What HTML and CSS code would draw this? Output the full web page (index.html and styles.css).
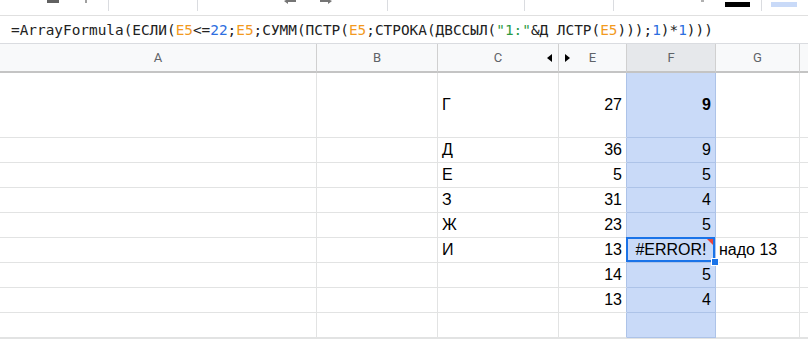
FILE: index.html
```html
<!DOCTYPE html>
<html lang="ru">
<head>
    <meta charset="UTF-8">
    <meta name="viewport" content="width=device-width, initial-scale=1.0">
    <title>Таблица</title>
    <link rel="stylesheet" href="styles.css">
</head>
<body>
    <!-- Нижний край панели инструментов -->
    <div class="toolbar">
        <span class="tb tb-print"></span>
        <span class="tb tb-paint"></span>
        <span class="tb-sep sep-1"></span>
        <span class="tb-sep sep-2"></span>
        <svg class="tb tb-dec" width="12" height="5" viewBox="0 0 12 5">
            <path d="M3 1h9" stroke="#757575" stroke-width="2"/>
            <path d="M0 1l4-2v5z" fill="#757575"/>
        </svg>
        <svg class="tb tb-inc" width="12" height="5" viewBox="0 0 12 5">
            <path d="M0 1h9" stroke="#757575" stroke-width="2"/>
            <path d="M12 1l-4-2v5z" fill="#757575"/>
        </svg>
        <span class="tb-sep sep-3"></span>
        <span class="tb-sep sep-4"></span>
        <span class="tb-sep sep-5"></span>
        <span class="tb tb-dot"></span>
        <span class="tb tb-color"></span>
        <span class="tb-sep sep-6"></span>
        <span class="tb tb-fill"></span>
    </div>

    <!-- Строка формул -->
    <div class="formula-bar">
        <span>=ArrayFormula(ЕСЛИ(<span class="ref">E5</span>&lt;=<span class="num-lit">22</span>;<span class="ref">E5</span>;СУММ(ПСТР(<span class="ref">E5</span>;СТРОКА(ДВССЫЛ(<span class="str">"1:"</span>&amp;Д ЛСТР(<span class="ref">E5</span>)));<span class="num-lit">1</span>)*<span class="num-lit">1</span>)))</span>
    </div>

    <!-- Сетка -->
    <div class="sheet">
        <div class="hd">A</div>
        <div class="hd">B</div>
        <div class="hd hd-c">C<span class="arrow-l"></span></div>
        <div class="hd hd-e"><span class="arrow-r"></span>E</div>
        <div class="hd hd-f">F</div>
        <div class="hd">G</div>
        <div class="hd hd-rest"></div>

        <div class="c"></div><div class="c"></div><div class="c txt">Г</div><div class="c num col-e">27</div><div class="c num sel bold">9</div><div class="c"></div><div class="c"></div>
        <div class="c"></div><div class="c"></div><div class="c txt">Д</div><div class="c num col-e">36</div><div class="c num sel">9</div><div class="c"></div><div class="c"></div>
        <div class="c"></div><div class="c"></div><div class="c txt">Е</div><div class="c num col-e">5</div><div class="c num sel">5</div><div class="c"></div><div class="c"></div>
        <div class="c"></div><div class="c"></div><div class="c txt">З</div><div class="c num col-e">31</div><div class="c num sel">4</div><div class="c"></div><div class="c"></div>
        <div class="c"></div><div class="c"></div><div class="c txt">Ж</div><div class="c num col-e">23</div><div class="c num sel">5</div><div class="c"></div><div class="c"></div>
        <div class="c"></div><div class="c"></div><div class="c txt">И</div><div class="c num col-e">13</div>
        <div class="c sel active err">#ERROR!<span class="err-mark"></span><span class="handle"></span></div>
        <div class="c txt note">надо 13</div><div class="c"></div>
        <div class="c"></div><div class="c"></div><div class="c"></div><div class="c num col-e">14</div><div class="c num sel">5</div><div class="c"></div><div class="c"></div>
        <div class="c"></div><div class="c"></div><div class="c"></div><div class="c num col-e">13</div><div class="c num sel">4</div><div class="c"></div><div class="c"></div>
        <div class="c"></div><div class="c"></div><div class="c"></div><div class="c col-e"></div><div class="c sel"></div><div class="c"></div><div class="c"></div>
        <div class="c"></div><div class="c"></div><div class="c"></div><div class="c"></div><div class="c dim"></div><div class="c"></div><div class="c"></div>
    </div>
</body>
</html>
```

FILE: styles.css
```css
body {
    margin: 0;
    background: #fff;
    font-family: "Liberation Sans", Arial, sans-serif;
    overflow: hidden;
}

/* панель инструментов (видна только нижняя кромка) */
.toolbar {
    display: flex;
    align-items: flex-start;
    height: 15px;
    border-bottom: 1px solid #e0e0e0;
}
.tb {
    display: block;
    flex: none;
}
.tb-print {
    margin-left: 47px;
    width: 12px;
    height: 3px;
    background: #616161;
}
.tb-paint {
    margin-left: 26px;
    width: 2px;
    height: 3px;
    background: #a0a0a0;
}
.tb-sep {
    flex: none;
    width: 1px;
    height: 11px;
    background: #dadce0;
}
.sep-1 { margin-left: 21px; }
.sep-2 { margin-left: 88px; }
.tb-dec { margin-left: 86px; }
.tb-inc { margin-left: 24px; }
.sep-3 { margin-left: 55px; }
.sep-4 { margin-left: 136px; }
.sep-5 { margin-left: 88px; }
.tb-dot {
    margin-left: 87px;
    width: 3px;
    height: 2px;
    background: #b0b0b0;
}
.tb-color {
    margin-left: 21px;
    margin-top: 2px;
    width: 25px;
    height: 5px;
    background: #000;
}
.sep-6 { margin-left: 11px; }
.tb-fill {
    margin-left: 9px;
    margin-top: 2px;
    width: 26px;
    height: 5px;
    background: #c9daf8;
}

/* строка формул */
.formula-bar {
    display: flex;
    align-items: center;
    height: 27px;
    padding-left: 11px;
    border-bottom: 1px solid #dadce0;
    font-family: "DejaVu Sans Mono", "Liberation Mono", monospace;
    font-size: 14.4px;
    color: #222;
    white-space: nowrap;
}
.ref { color: #f29a1f; }
.num-lit { color: #2d6ee0; }
.str { color: #2c9a43; }

/* сетка */
.sheet {
    display: grid;
    grid-template-columns: 317px 121px 121px 68px 89px 84px 1fr;
    grid-template-rows: 29px 65px repeat(8, 25px);
}
.hd {
    position: relative;
    display: flex;
    align-items: center;
    justify-content: center;
    box-sizing: border-box;
    background: #f8f9fa;
    border-right: 1px solid #d0d0d0;
    border-bottom: 2px solid #c4c4c4;
    font-family: Roboto, "Liberation Sans", sans-serif;
    font-size: 13px;
    color: #5f6368;
}
.hd-f {
    background: #e6e8eb;
}
.hd-rest {
    border-right: none;
}
.arrow-l {
    position: absolute;
    right: 6px;
    top: 10px;
    width: 0;
    height: 0;
    border-top: 4px solid transparent;
    border-bottom: 4px solid transparent;
    border-right: 5px solid #000;
}
.arrow-r {
    position: absolute;
    left: 6px;
    top: 10px;
    width: 0;
    height: 0;
    border-top: 4px solid transparent;
    border-bottom: 4px solid transparent;
    border-left: 5px solid #000;
}
.c {
    display: flex;
    align-items: center;
    box-sizing: border-box;
    padding: 0 4px;
    border-right: 1px solid #e2e3e3;
    border-bottom: 1px solid #e2e3e3;
    font-size: 16px;
    color: #000;
    white-space: nowrap;
}
.txt {
    justify-content: flex-start;
}
.num {
    justify-content: flex-end;
}
.bold {
    font-weight: bold;
}
.col-e {
    border-right-color: #adc3e8;
}
.sel {
    background: #c9daf8;
    border-right-color: #adc3e8;
    border-bottom-color: #adc3e8;
}
.dim {
    background: #f3f3f3;
}
.note {
    padding-left: 3px;
}
.err {
    justify-content: center;
}
.active {
    position: relative;
}
.active::after {
    content: '';
    position: absolute;
    top: -1px;
    left: -1px;
    right: 0;
    bottom: 0;
    border: 2px solid #1a73e8;
}
.err-mark {
    position: absolute;
    top: 1px;
    right: 2px;
    width: 0;
    height: 0;
    border-top: 6px solid #e8453c;
    border-left: 6px solid transparent;
    z-index: 1;
}
.handle {
    position: absolute;
    right: -4px;
    bottom: -4px;
    width: 6px;
    height: 6px;
    background: #1a73e8;
    border: 1px solid #fff;
    z-index: 2;
}
```
